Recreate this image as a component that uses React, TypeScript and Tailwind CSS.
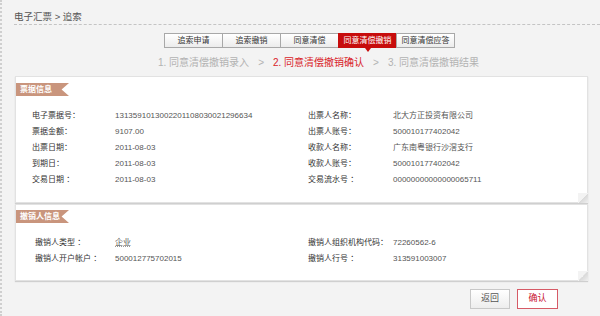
import React from "react";

const TABS = ["追索申请", "追索撤销", "同意清偿", "同意清偿撤销", "同意清偿应答"];

const BILL_LEFT = [
  ["电子票据号：", "1313591013002201108030021296634"],
  ["票据金额：", "9107.00"],
  ["出票日期：", "2011-08-03"],
  ["到期日：", "2011-08-03"],
  ["交易日期 ：", "2011-08-03"],
];

const BILL_RIGHT = [
  ["出票人名称：", "北大方正投资有限公司"],
  ["出票人账号：", "500010177402042"],
  ["收款人名称：", "广东南粤银行沙滘支行"],
  ["收款人账号：", "500010177402042"],
  ["交易流水号 ：", "00000000000000065711"],
];

const REVOKER_LEFT = [
  ["撤销人类型 ：", "企业"],
  ["撤销人开户帐户 ：", "500012775702015"],
];

const REVOKER_RIGHT = [
  ["撤销人组织机构代码：", "72260562-6"],
  ["撤销人行号 ：", "313591003007"],
];

function Tag({ label }: { label: string }) {
  return (
    <div className="h-[13px] w-[53px] bg-[#c9957d] text-white text-[8px] leading-[13px] font-bold pl-[4px] [clip-path:polygon(0_0,100%_0,86%_50%,100%_100%,0_100%)]">
      {label}
    </div>
  );
}

function Column({ rows, labelW }: { rows: string[][]; labelW: string }) {
  return (
    <div className="flex flex-col">
      {rows.map(([k, v]) => (
        <div key={k} className="flex h-[16px] items-center">
          <span className={`${labelW} text-[#333]`}>{k}</span>
          <span className={v === "企业" ? "text-[#555] underline decoration-dotted decoration-[#999]" : "text-[#555]"}>
            {v}
          </span>
        </div>
      ))}
    </div>
  );
}

function Card({ children, className }: { children: React.ReactNode; className: string }) {
  return (
    <div
      className={`relative ml-[13px] w-[573px] bg-white border border-[#e2e2e2] shadow-[0_1px_1px_#cfcfcf] ${className}`}
    >
      {children}
      <div className="absolute right-[-1px] bottom-[-1px] w-[10px] h-[10px] bg-[#f3f3f3]">
        <div className="w-full h-full bg-gradient-to-br from-transparent from-50% via-[#d8d8d8] via-50% to-[#f0f0f0] [clip-path:polygon(100%_0,100%_100%,0_100%)]" />
      </div>
    </div>
  );
}

export default function App() {
  return (
    <div
      className="w-[600px] h-[316px] bg-[#f3f3f3] border-l-2 border-dotted border-[#cfcfcf] overflow-hidden"
      style={{ fontFamily: '"Liberation Sans", "Noto Sans CJK SC", sans-serif' }}
    >
      {/* breadcrumb */}
      <div className="ml-[12px] pt-[11px] h-[25px] border-b border-dashed border-[#c4c4c4] text-[9.5px] leading-[12px] text-[#555]">
        电子汇票 &gt; 追索
      </div>

      {/* tabs */}
      <div className="mt-[8px] ml-[162px] flex h-[15px]">
        {TABS.map((t, i) => {
          const active = i === 3;
          return (
            <div
              key={t}
              className={`relative w-[59px] h-[15px] flex items-center justify-center text-[8px] border ${
                active
                  ? "bg-[#c70c0c] border-[#c70c0c] text-white"
                  : "bg-gradient-to-b from-white to-[#ececec] border-[#a8a8a8] text-[#333]"
              } ${i > 0 ? "-ml-px" : ""}`}
            >
              {t}
              {active && (
                <div className="absolute left-1/2 -translate-x-1/2 top-[14px] w-0 h-0 border-l-[3px] border-r-[3px] border-t-[4px] border-l-transparent border-r-transparent border-t-[#c70c0c]" />
              )}
            </div>
          );
        })}
      </div>

      {/* steps */}
      <div className="mt-[8px] ml-[156px] flex items-center h-[13px] text-[10px] text-[#b2b2b2] whitespace-nowrap">
        <span>1. 同意清偿撤销录入</span>
        <span className="mx-[9px]">&gt;</span>
        <span className="text-[#d9232a]">2. 同意清偿撤销确认</span>
        <span className="mx-[9px]">&gt;</span>
        <span>3. 同意清偿撤销结果</span>
      </div>

      {/* bill info */}
      <Card className="mt-[7px] h-[127px] text-[8px]">
        <div className="pt-[6px]">
          <Tag label="票据信息" />
        </div>
        <div className="mt-[12px] pl-[16px] flex">
          <div className="w-[276px]">
            <Column rows={BILL_LEFT} labelW="w-[83px]" />
          </div>
          <Column rows={BILL_RIGHT} labelW="w-[85px]" />
        </div>
      </Card>

      {/* revoker info */}
      <Card className="mt-[1px] h-[77px] text-[8px]">
        <div className="pt-[5px]">
          <Tag label="撤销人信息" />
        </div>
        <div className="mt-[12px] pl-[19px] flex">
          <div className="w-[273px]">
            <Column rows={REVOKER_LEFT} labelW="w-[80px]" />
          </div>
          <Column rows={REVOKER_RIGHT} labelW="w-[85px]" />
        </div>
      </Card>

      {/* buttons */}
      <div className="mt-[8px] ml-[468px] flex gap-[7px]">
        <button className="w-[40px] h-[20px] border border-[#c8c8c8] bg-gradient-to-b from-white to-[#ededed] text-[9px] text-[#555]">
          返回
        </button>
        <button className="w-[41px] h-[20px] border border-[#d65a66] bg-white text-[9px] text-[#c8102e]">
          确认
        </button>
      </div>
    </div>
  );
}
